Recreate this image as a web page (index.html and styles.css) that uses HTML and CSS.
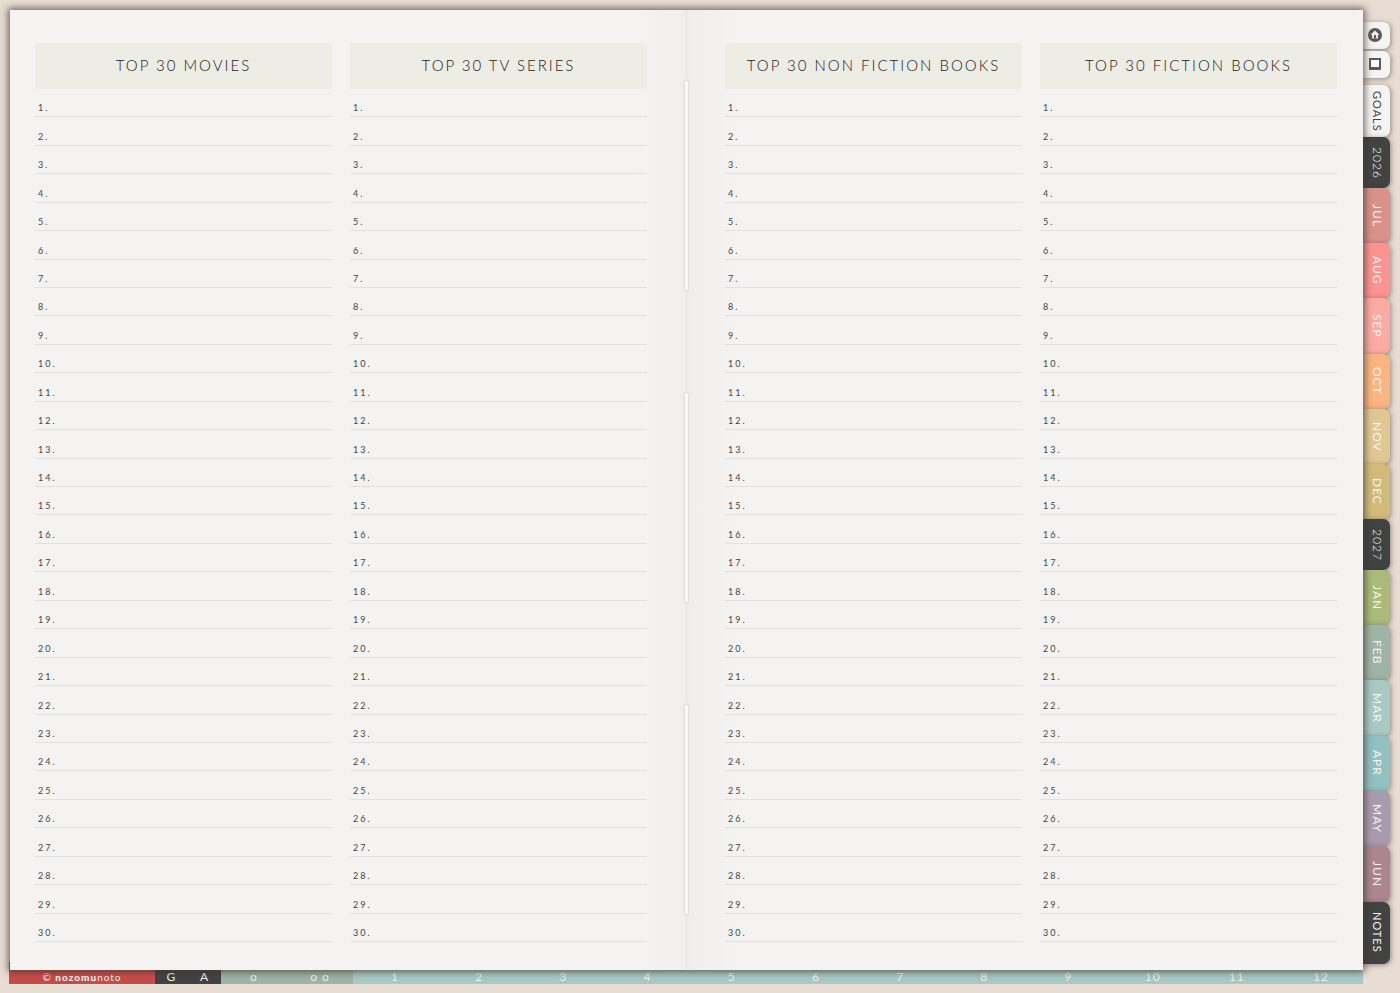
FILE: index.html
```html
<!DOCTYPE html>
<html lang="en">
<head>
	<meta charset="UTF-8" />
	<meta name="viewport" content="width=device-width, initial-scale=1.0" />
	<title>Planner</title>
	<link rel="stylesheet" href="styles.css">
</head>
<body>
	<div class="book">
		<main class="spread">
			<div class="page page--left">
				<section class="card">
					<h2>TOP 30 MOVIES</h2>
					<ol>
						<li>1.</li><li>2.</li><li>3.</li><li>4.</li><li>5.</li>
						<li>6.</li><li>7.</li><li>8.</li><li>9.</li><li>10.</li>
						<li>11.</li><li>12.</li><li>13.</li><li>14.</li><li>15.</li>
						<li>16.</li><li>17.</li><li>18.</li><li>19.</li><li>20.</li>
						<li>21.</li><li>22.</li><li>23.</li><li>24.</li><li>25.</li>
						<li>26.</li><li>27.</li><li>28.</li><li>29.</li><li>30.</li>
					</ol>
				</section>
				<section class="card">
					<h2>TOP 30 TV SERIES</h2>
					<ol>
						<li>1.</li><li>2.</li><li>3.</li><li>4.</li><li>5.</li>
						<li>6.</li><li>7.</li><li>8.</li><li>9.</li><li>10.</li>
						<li>11.</li><li>12.</li><li>13.</li><li>14.</li><li>15.</li>
						<li>16.</li><li>17.</li><li>18.</li><li>19.</li><li>20.</li>
						<li>21.</li><li>22.</li><li>23.</li><li>24.</li><li>25.</li>
						<li>26.</li><li>27.</li><li>28.</li><li>29.</li><li>30.</li>
					</ol>
				</section>
			</div>
			<div class="page page--right">
				<section class="card">
					<h2>TOP 30 NON FICTION BOOKS</h2>
					<ol>
						<li>1.</li><li>2.</li><li>3.</li><li>4.</li><li>5.</li>
						<li>6.</li><li>7.</li><li>8.</li><li>9.</li><li>10.</li>
						<li>11.</li><li>12.</li><li>13.</li><li>14.</li><li>15.</li>
						<li>16.</li><li>17.</li><li>18.</li><li>19.</li><li>20.</li>
						<li>21.</li><li>22.</li><li>23.</li><li>24.</li><li>25.</li>
						<li>26.</li><li>27.</li><li>28.</li><li>29.</li><li>30.</li>
					</ol>
				</section>
				<section class="card">
					<h2>TOP 30 FICTION BOOKS</h2>
					<ol>
						<li>1.</li><li>2.</li><li>3.</li><li>4.</li><li>5.</li>
						<li>6.</li><li>7.</li><li>8.</li><li>9.</li><li>10.</li>
						<li>11.</li><li>12.</li><li>13.</li><li>14.</li><li>15.</li>
						<li>16.</li><li>17.</li><li>18.</li><li>19.</li><li>20.</li>
						<li>21.</li><li>22.</li><li>23.</li><li>24.</li><li>25.</li>
						<li>26.</li><li>27.</li><li>28.</li><li>29.</li><li>30.</li>
					</ol>
				</section>
			</div>
			<div class="spine">
				<span class="staple"></span>
				<span class="staple"></span>
				<span class="staple"></span>
			</div>
		</main>
		<footer class="strip">
			<div class="strip__group brand"><span>© <b>nozomu</b>noto</span></div>
			<div class="strip__group dark"><a href="#g">G</a><a href="#a">A</a></div>
			<div class="strip__group sage"><a href="#o">o</a><a href="#oo">o o</a></div>
			<div class="strip__group teal">
				<a href="#1">1</a><a href="#2">2</a><a href="#3">3</a><a href="#4">4</a>
				<a href="#5">5</a><a href="#6">6</a><a href="#7">7</a><a href="#8">8</a>
				<a href="#9">9</a><a href="#10">10</a><a href="#11">11</a><a href="#12">12</a>
			</div>
		</footer>
	</div>
	<nav class="tabs">
		<a class="tab tab--icon" href="#home" aria-label="Home">
			<svg viewBox="0 0 14 14" width="14" height="14">
				<circle cx="7" cy="7" r="7" fill="#5b5b5b"/>
				<path d="M7 2.6 2.6 6.8h1.5v3.8h5.8V6.8h1.5z" fill="#f5f4f2"/>
				<path d="M5.9 10.6V7.9a1.1 1.1 0 0 1 2.2 0v2.7z" fill="#5b5b5b"/>
			</svg>
		</a>
		<a class="tab tab--icon" href="#index" aria-label="Index">
			<svg viewBox="0 0 14 14" width="14" height="14">
				<path d="M2 2h10v10H2z" fill="#fff" stroke="#5b5b5b" stroke-width="2"/>
				<path d="M1 11.5h12" stroke="#5b5b5b" stroke-width="3"/>
			</svg>
		</a>
		<a class="tab goals" href="#goals">GOALS</a>
		<a class="tab year" href="#2026">2026</a>
		<a class="tab jul" href="#jul">JUL</a>
		<a class="tab aug" href="#aug">AUG</a>
		<a class="tab sep" href="#sep">SEP</a>
		<a class="tab oct" href="#oct">OCT</a>
		<a class="tab nov" href="#nov">NOV</a>
		<a class="tab dec" href="#dec">DEC</a>
		<a class="tab year" href="#2027">2027</a>
		<a class="tab jan" href="#jan">JAN</a>
		<a class="tab feb" href="#feb">FEB</a>
		<a class="tab mar" href="#mar">MAR</a>
		<a class="tab apr" href="#apr">APR</a>
		<a class="tab may" href="#may">MAY</a>
		<a class="tab jun" href="#jun">JUN</a>
		<a class="tab notes" href="#notes">NOTES</a>
	</nav>
</body>
</html>
```
FILE: styles.css
```css
:root {
	--bg: #e8ddd3;
	--paper: #f4f3f1;
	--ink: #444;
	--dark: #424242;
	--sage: #9fb3a6;
	--teal: #a9c9c4;
}

*,
*:after,
*:before {
	box-sizing: border-box;
}

body {
	margin: 0;
	min-height: 100vh;
	padding: 10px 10px 9px;
	display: flex;
	background: var(--bg);
	color: var(--ink);
	font-family: Lato, "Liberation Sans", sans-serif;
}

a {
	color: inherit;
	text-decoration: none;
}

.book {
	flex: 1;
	display: flex;
	flex-direction: column;
	position: relative;
	z-index: 1;
}

.spread {
	flex: 1;
	display: flex;
	position: relative;
	z-index: 1;
	background: var(--paper);
	box-shadow: 0 0 7px 2px rgba(60, 52, 46, 0.7);
}

.page {
	flex: 1;
	display: grid;
	grid-template-columns: 1fr 1fr;
	gap: 18px;
	padding: 33px 39px 28px 25px;
	background: linear-gradient(to left, #f0efee, #f4f3f1 50px);
}

.page--right {
	padding: 33px 26px 28px 39px;
	background: linear-gradient(to right, #efeeed, #f4f3f1 50px);
}

.card {
	display: flex;
	flex-direction: column;
}

h2 {
	margin: 0;
	height: 46px;
	padding-bottom: 2px;
	display: flex;
	align-items: center;
	justify-content: center;
	background: #edece5;
	color: #222;
	font-size: 15px;
	font-weight: 300;
	letter-spacing: 2px;
	white-space: nowrap;
}

ol {
	flex: 1;
	display: grid;
	grid-auto-rows: 1fr;
	margin: 0;
	padding: 0;
	list-style: none;
}

li {
	display: flex;
	align-items: flex-end;
	padding: 0 3px 2px;
	border-bottom: 1px solid #e2e1df;
	font-size: 9px;
	line-height: 12px;
	letter-spacing: 2px;
}

/* centre fold with the three staples */
.spine {
	position: absolute;
	top: 0;
	bottom: 0;
	left: 50%;
	width: 5px;
	margin-left: -3px;
	padding: 70px 0 55px;
	display: flex;
	flex-direction: column;
	gap: 101px;
	background: linear-gradient(#e4e3e2, #e4e3e2) center / 1px 100% no-repeat;
}

.staple {
	flex: 1;
	border: 1px solid #e3e2e1;
	border-radius: 3px;
	background: #fafafa;
	box-shadow: 0 0 2px rgba(0, 0, 0, 0.08);
}

.strip {
	display: flex;
	height: 22px;
	margin: -8px 0 0 -1px;
	color: #eef2ef;
	font-size: 12px;
	line-height: 14px;
	letter-spacing: 1px;
	text-align: center;
}

.strip__group {
	display: flex;
	flex: 66 1 0;
	padding-top: 8px;
}

.strip__group > * {
	flex: 1;
}

.brand {
	flex-grow: 146;
	background: #c84b4b;
	font-size: 10px;
}

.brand b {
	font-weight: 900;
}

.dark {
	background: var(--dark);
}

.sage {
	flex-grow: 132;
	background: var(--sage);
}

.teal {
	flex-grow: 1010;
	background: var(--teal);
}

.tabs {
	width: 27px;
	display: flex;
	flex-direction: column;
	padding: 12px 0 20px;
}

.tab {
	flex: 55 1 0;
	display: flex;
	align-items: center;
	justify-content: center;
	writing-mode: vertical-rl;
	padding-left: 1px;
	border-radius: 0 7px 7px 0;
	box-shadow: 1px 1px 5px rgba(60, 52, 46, 0.5);
	color: #f6f3ee;
	font-size: 12px;
	letter-spacing: 1px;
}

.tab--icon {
	flex: none;
	height: 27px;
	margin-bottom: 2px;
	padding: 0 3px 2px 0;
	background: #f5f4f2;
}

.goals,
.notes {
	font-size: 11px;
}

.goals {
	flex-grow: 52;
	margin-top: 5px;
	background: #f5f4f2;
	color: var(--ink);
}

.year {
	flex-grow: 50;
	background: var(--dark);
	color: #fff;
	font-weight: 300;
}

.notes {
	flex-grow: 62;
	background: var(--dark);
}

.jul { background: #d9918a; }
.aug { background: #fb9490; }
.sep { background: #fbaaa4; }
.oct { background: #fab581; }
.nov { background: #e0c892; }
.dec { background: #d2bb79; }
.jan { background: #aaba78; }
.feb { background: #9fb3a6; }
.mar { background: #a9c9c4; }
.apr { background: #92c1c1; }
.may { background: #a99bae; }
.jun { background: #ab858f; }
```
